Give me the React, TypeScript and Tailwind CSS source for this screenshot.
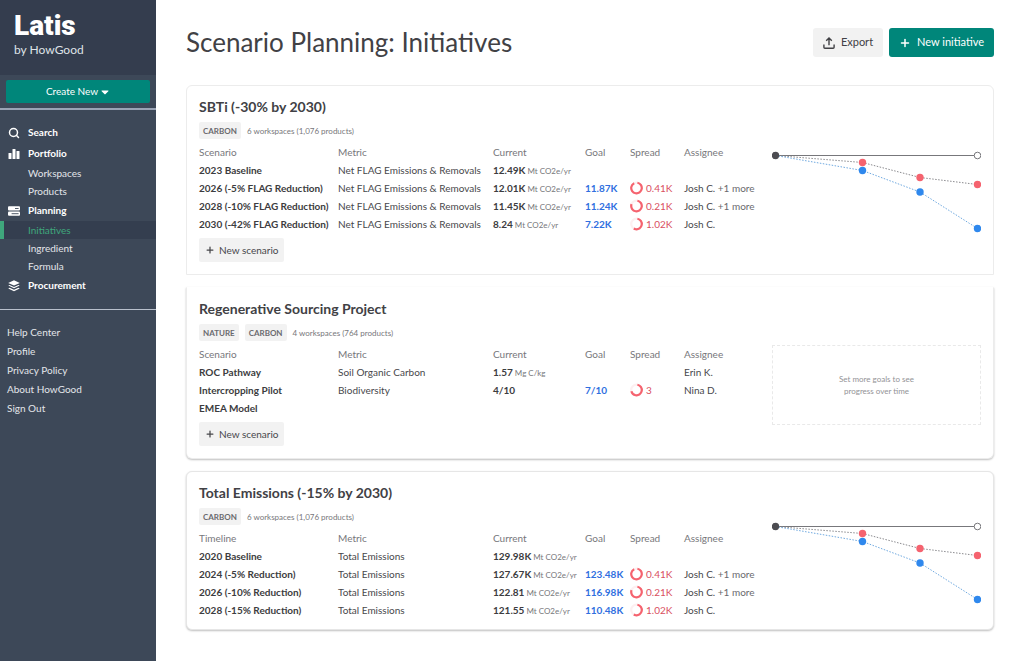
import React from 'react';
import { FaCaretDown } from 'react-icons/fa';
import { Plus, Search } from 'lucide-react';

interface Scenario {
  name: string;
  metric?: string;
  current?: string;
  unit?: string;
  goal?: string;
  spread?: string;
  ring?: number;
  assignee?: string;
  more?: string;
}

interface Initiative {
  title: string;
  tags: string[];
  summary: string;
  firstColumn: string;
  scenarios: Scenario[];
  hasChart: boolean;
  canAdd: boolean;
  cardClass: string;
}

const FLAG = 'Net FLAG Emissions & Removals';
const TOTAL = 'Total Emissions';
const MT = 'Mt CO2e/yr';

const initiatives: Initiative[] = [
  {
    title: 'SBTi (-30% by 2030)',
    tags: ['CARBON'],
    summary: '6 workspaces (1,076 products)',
    firstColumn: 'Scenario',
    hasChart: true,
    canAdd: true,
    cardClass: 'rounded-t-md border border-[#ececec]',
    scenarios: [
      { name: '2023 Baseline', metric: FLAG, current: '12.49K', unit: MT },
      { name: '2026 (-5% FLAG Reduction)', metric: FLAG, current: '12.01K', unit: MT, goal: '11.87K', spread: '0.41K', ring: 90, assignee: 'Josh C.', more: '+1 more' },
      { name: '2028 (-10% FLAG Reduction)', metric: FLAG, current: '11.45K', unit: MT, goal: '11.24K', spread: '0.21K', ring: 78, assignee: 'Josh C.', more: '+1 more' },
      { name: '2030 (-42% FLAG Reduction)', metric: FLAG, current: '8.24', unit: MT, goal: '7.22K', spread: '1.02K', ring: 56, assignee: 'Josh C.' },
    ],
  },
  {
    title: 'Regenerative Sourcing Project',
    tags: ['NATURE', 'CARBON'],
    summary: '4 workspaces (764 products)',
    firstColumn: 'Scenario',
    hasChart: false,
    canAdd: true,
    cardClass: 'rounded-b-md border border-[#ececec] border-t-transparent shadow-[0_1px_2px_rgba(0,0,0,0.25)]',
    scenarios: [
      { name: 'ROC Pathway', metric: 'Soil Organic Carbon', current: '1.57', unit: 'Mg C/kg', assignee: 'Erin K.' },
      { name: 'Intercropping Pilot', metric: 'Biodiversity', current: '4/10', goal: '7/10', spread: '3', ring: 68, assignee: 'Nina D.' },
      { name: 'EMEA Model' },
    ],
  },
  {
    title: 'Total Emissions (-15% by 2030)',
    tags: ['CARBON'],
    summary: '6 workspaces (1,076 products)',
    firstColumn: 'Timeline',
    hasChart: true,
    canAdd: false,
    cardClass: 'rounded-md border border-[#e6e6e6] shadow-[0_1px_2px_rgba(0,0,0,0.25)]',
    scenarios: [
      { name: '2020 Baseline', metric: TOTAL, current: '129.98K', unit: MT },
      { name: '2024 (-5% Reduction)', metric: TOTAL, current: '127.67K', unit: MT, goal: '123.48K', spread: '0.41K', ring: 90, assignee: 'Josh C.', more: '+1 more' },
      { name: '2026 (-10% Reduction)', metric: TOTAL, current: '122.81', unit: MT, goal: '116.98K', spread: '0.21K', ring: 78, assignee: 'Josh C.', more: '+1 more' },
      { name: '2028 (-15% Reduction)', metric: TOTAL, current: '121.55', unit: MT, goal: '110.48K', spread: '1.02K', ring: 56, assignee: 'Josh C.' },
    ],
  },
];

function BarsIcon() {
  return (
    <svg viewBox="0 0 12 12" className="w-3 h-3" fill="currentColor">
      <rect x="0.5" y="5" width="3" height="6" rx="0.6" />
      <rect x="4.5" y="1" width="3" height="10" rx="0.6" />
      <rect x="8.5" y="3" width="3" height="8" rx="0.6" />
    </svg>
  );
}

function ServerIcon() {
  return (
    <svg viewBox="0 0 12 12" className="w-3 h-3">
      <rect x="0" y="1.2" width="12" height="4.3" rx="1" fill="#fff" />
      <rect x="0" y="6.5" width="12" height="4.3" rx="1" fill="#fff" />
      <path d="M7 3.5h3.6M3.6 8.7h7" stroke="#3d4858" strokeWidth="0.9" />
    </svg>
  );
}

function LayersIcon() {
  return (
    <svg viewBox="0 0 12 12" className="w-3 h-3" fill="currentColor">
      <path d="M6 0.2 11.8 2.9 6 5.6 0.2 2.9z" />
      <path d="M1.6 4.9 6 6.9l4.4-2 1.4.7L6 8.3.2 5.6z" />
      <path d="M1.6 7.8 6 9.8l4.4-2 1.4.7L6 11.3.2 8.5z" />
    </svg>
  );
}

function ExportIcon() {
  return (
    <svg viewBox="0 0 12 12" className="w-3 h-3" fill="none" stroke="currentColor" strokeWidth="1.4">
      <path d="M6 8.2V1.2M3.2 3.8 6 1l2.8 2.8M0.9 7.6v2.6q0 1 1 1h8.2q1 0 1-1V7.6" />
    </svg>
  );
}

function Ring({ percent }: { percent: number }) {
  return (
    <svg viewBox="0 0 14 14" className="w-[14px] h-[14px] shrink-0" fill="none" strokeWidth="2.2">
      <circle cx="6.5" cy="7" r="5.3" stroke="#fdf0f1" />
      <circle cx="6.5" cy="7" r="5.3" stroke="#f5636f" pathLength={100} strokeDasharray={`${percent} 100`} transform="rotate(-80 6.5 7)" />
    </svg>
  );
}

function ProgressChart() {
  return (
    <svg viewBox="0 0 209 82" className="w-full" role="img" aria-label="Progress over time">
      <g fill="none" strokeWidth="1">
        <path d="M3.5 4.5H205.5" stroke="#77777b" />
        <path d="M3.5 4.5 90.5 11.5 148 26.5 205.5 33.5" stroke="#8a8a8e" strokeDasharray="1.5 1.5" />
        <path d="M3.5 4.5 90.5 19.5 148 41 205.5 77.5" stroke="#6fa9e0" strokeDasharray="1.5 1.5" />
      </g>
      <circle cx="3.5" cy="4.5" r="3.7" fill="#4c4c51" />
      <circle cx="205.5" cy="4.5" r="3.3" fill="#fff" stroke="#77777b" />
      <g fill="#2f88ed">
        <circle cx="90.5" cy="19.5" r="3.7" />
        <circle cx="148" cy="41" r="3.7" />
        <circle cx="205.5" cy="77.5" r="3.7" />
      </g>
      <g fill="#f5636f">
        <circle cx="90.5" cy="11.5" r="3.7" />
        <circle cx="148" cy="26.5" r="3.7" />
        <circle cx="205.5" cy="33.5" r="3.7" />
      </g>
    </svg>
  );
}

function NavGroup({ icon, label, children }: { icon: React.ReactNode; label: string; children?: React.ReactNode }) {
  return (
    <li>
      <a href="#" className="flex items-center gap-2 h-[21px] pl-2 font-bold text-white">
        {icon}
        <span>{label}</span>
      </a>
      {children && <ul>{children}</ul>}
    </li>
  );
}

function NavItem({ label, active = false }: { label: string; active?: boolean }) {
  return (
    <li>
      <a
        href="#"
        className={
          active
            ? 'flex items-center h-[18px] pl-6 border-l-4 border-[#3fa67c] bg-[#343e4f] text-[#3fa67c]'
            : 'flex items-center h-[18px] pl-7 text-[#e3e6ea]'
        }
      >
        {label}
      </a>
    </li>
  );
}

function Sidebar() {
  return (
    <aside className="w-[156px] shrink-0 bg-[#3d4858] text-[10px]">
      <div className="h-[75px] pl-[14px] pt-[9px] bg-[#343d4e]">
        <div className="text-[28px] leading-[34px] font-black font-['Roboto','Lato',sans-serif] text-white">Latis</div>
        <div className="text-[12px] leading-[14px] text-[#dfe3e8]">by HowGood</div>
      </div>
      <div className="px-[6px] pt-[5px] pb-[5px] border-b-2 border-[#9aa3b5]">
        <button className="w-full h-[23px] rounded-xs bg-[#00867a] text-white flex items-center justify-center gap-[2px]">
          Create New
          <FaCaretDown className="w-[10px] h-3" />
        </button>
      </div>
      <nav className="pt-3 pb-[13px] border-b border-[#b9c0cc]">
        <ul>
          <NavGroup icon={<Search className="w-3 h-3" strokeWidth={3} />} label="Search" />
          <NavGroup icon={<BarsIcon />} label="Portfolio">
            <NavItem label="Workspaces" />
            <NavItem label="Products" />
          </NavGroup>
          <NavGroup icon={<ServerIcon />} label="Planning">
            <NavItem label="Initiatives" active />
            <NavItem label="Ingredient" />
            <NavItem label="Formula" />
          </NavGroup>
          <NavGroup icon={<LayersIcon />} label="Procurement" />
        </ul>
      </nav>
      <ul className="pt-[13px] pl-[7px] leading-[19px] text-[#e3e6ea]">
        {['Help Center', 'Profile', 'Privacy Policy', 'About HowGood', 'Sign Out'].map((label) => (
          <li key={label} className="h-[19px]">
            <a href="#">{label}</a>
          </li>
        ))}
      </ul>
    </aside>
  );
}

function ScenarioTable({ item }: { item: Initiative }) {
  return (
    <table className="mt-[3px] w-full table-fixed text-left text-[10px] leading-[14px] whitespace-nowrap text-[#47474b]">
      <colgroup>
        <col className="w-[139px]" />
        <col className="w-[155px]" />
        <col className="w-[92px]" />
        <col className="w-[45px]" />
        <col className="w-[54px]" />
        <col />
      </colgroup>
      <thead>
        <tr className="h-[19px] text-[#77777b]">
          {[item.firstColumn, 'Metric', 'Current', 'Goal', 'Spread', 'Assignee'].map((head) => (
            <th key={head} className="p-0 font-normal">{head}</th>
          ))}
        </tr>
      </thead>
      <tbody>
        {item.scenarios.map((row) => (
          <tr key={row.name} className="h-[18px]">
            <td className="p-0 font-bold text-[#3c3c40]">{row.name}</td>
            <td className="p-0">{row.metric}</td>
            <td className="p-0">
              <span className="font-bold text-[#3c3c40]">{row.current}</span>
              {row.unit && <span className="text-[8px] leading-none text-[#77777b]"> {row.unit}</span>}
            </td>
            <td className="p-0 font-bold text-[#2f6fe0]">{row.goal}</td>
            <td className="p-0">
              {row.spread && (
                <span className="flex items-center gap-[2px] text-[#d9505f]">
                  <Ring percent={row.ring ?? 0} />
                  {row.spread}
                </span>
              )}
            </td>
            <td className="p-0">
              {row.assignee}
              {row.more && <span className="text-[#6a6a6e]"> {row.more}</span>}
            </td>
          </tr>
        ))}
      </tbody>
    </table>
  );
}

function InitiativeCard({ item }: { item: Initiative }) {
  return (
    <section className={`flex items-center px-3 bg-white ${item.cardClass}`}>
      <div className={item.canAdd ? 'flex-1 min-w-0 py-3' : 'flex-1 min-w-0 pt-3 pb-[10px]'}>
        <h2 className="text-[14px] leading-[18px] font-bold text-[#414145]">{item.title}</h2>
        <div className="mt-[6px] flex items-center gap-[6px] h-[17px] text-[8px] text-[#77777b]">
          {item.tags.map((tag) => (
            <span key={tag} className="h-full px-1 flex items-center rounded-xs bg-[#f2f2f2] font-bold text-[#6a6a6e]">{tag}</span>
          ))}
          <span>{item.summary}</span>
        </div>
        <ScenarioTable item={item} />
        {item.canAdd && (
          <button className="mt-[5px] h-6 px-[6px] flex items-center gap-1 rounded-xs bg-[#f2f2f2] text-[10px] text-[#47474b]">
            <Plus className="w-[10px] h-[10px]" strokeWidth={3} />
            New scenario
          </button>
        )}
      </div>
      <div className="w-[209px] shrink-0 pt-6">
        {item.hasChart ? (
          <ProgressChart />
        ) : (
          <div className="h-20 flex items-center justify-center border border-dashed border-[#e9e9e9] text-center text-[8px] leading-[12px] text-[#929296]">
            Set more goals to see
            <br />
            progress over time
          </div>
        )}
      </div>
    </section>
  );
}

export default function App() {
  return (
    <div className="min-h-screen flex bg-white font-['Lato','Noto_Sans',sans-serif]">
      <Sidebar />
      <main className="flex-1 min-w-0 pt-7 pl-[30px] pr-[30px] pb-6">
        <header className="flex items-center justify-between text-[11px]">
          <h1 className="text-[26px] leading-[29px] text-[#414145]">Scenario Planning: Initiatives</h1>
          <div className="flex gap-[6px]">
            <button className="h-[29px] px-[10px] flex items-center gap-[6px] rounded-[3px] bg-[#f2f2f2] text-[#414145]">
              <ExportIcon />
              Export
            </button>
            <button className="h-[29px] px-[10px] flex items-center gap-[6px] rounded-[3px] bg-[#00867a] text-white">
              <Plus className="w-3 h-3" strokeWidth={3} />
              New initiative
            </button>
          </div>
        </header>
        <div className="mt-7 flex flex-col gap-3">
          {initiatives.map((item) => (
            <InitiativeCard key={item.title} item={item} />
          ))}
        </div>
      </main>
    </div>
  );
}
